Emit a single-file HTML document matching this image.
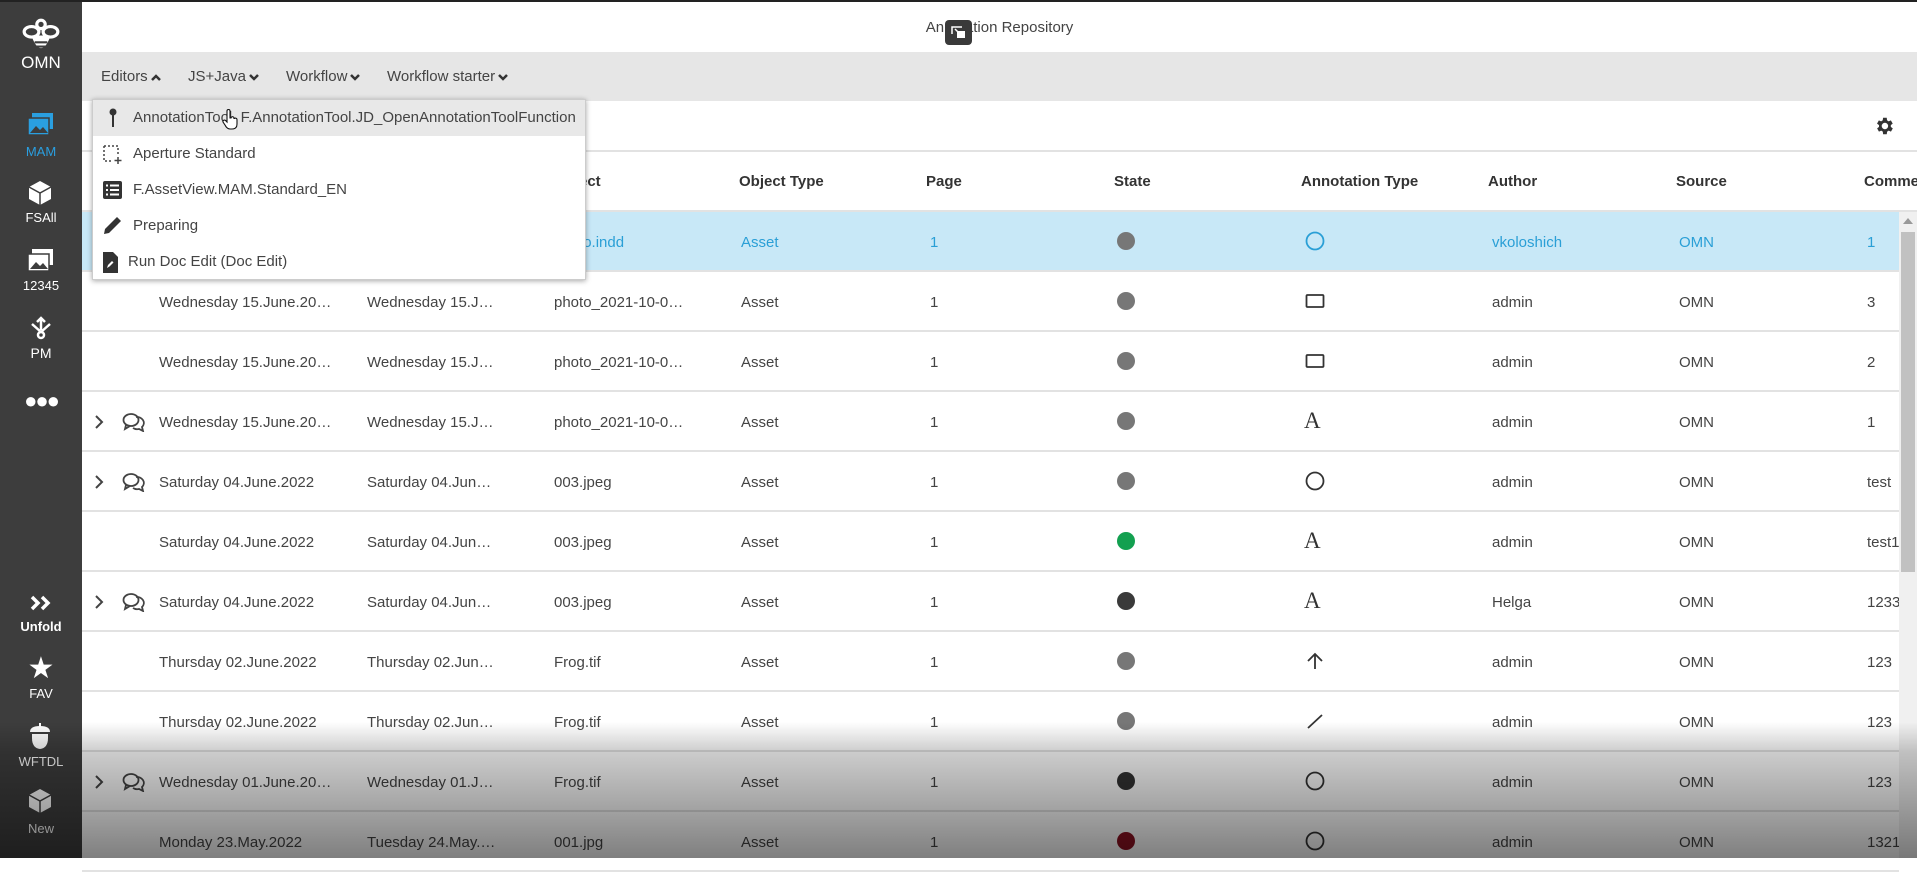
<!DOCTYPE html>
<html><head><meta charset="utf-8">
<style>
*{box-sizing:border-box;margin:0;padding:0}
body{width:1917px;height:858px;overflow:hidden;position:relative;font-family:"Liberation Sans",Arial,sans-serif;background:#fff;color:#444}
.abs{position:absolute}
#side{left:0;top:0;width:82px;height:858px;background:#3d3d3d;color:#fff;text-align:center}
.si{position:absolute;left:0;width:82px;font-size:13px;text-align:center}
#topline{left:0;top:0;width:1917px;height:2px;background:#222}
#title{left:82px;top:2px;width:1835px;height:50px;background:#fff;text-align:center;line-height:52px;font-size:15px;color:#444}
#tool{left:82px;top:52px;width:1835px;height:49px;background:#e6e6e6}
.menu{position:absolute;top:68px;font-size:15px;color:#444}
.menu svg{vertical-align:middle;margin-left:2px}
#bar2{left:82px;top:101px;width:1835px;height:51px;background:#fff;border-bottom:2px solid #e2e2e2}
.hd{position:absolute;top:173px;font-size:15px;font-weight:bold;color:#333}
.row{position:absolute;left:82px;width:1817px;height:60px;border-bottom:2px solid #e2e2e2}
.c{position:absolute;font-size:15px;white-space:nowrap;color:#444}
.dot{position:absolute;width:18px;height:18px;border-radius:50%}
#dd{left:92px;top:99px;width:494px;height:181px;background:#fff;box-shadow:0 1px 5px rgba(0,0,0,.35);border:1px solid #ccc}
.di{position:absolute;left:0;width:492px;height:36px;font-size:15px;color:#444;line-height:36px}
#shade{left:0;top:0;width:1917px;height:858px;pointer-events:none;background:linear-gradient(to bottom,rgba(0,0,0,0) 0,rgba(0,0,0,0) 722px,rgba(0,0,0,.2) 752px,rgba(0,0,0,.5) 858px)}
</style></head><body>
<div id="side" class="abs">
 <svg class="abs" style="left:21px;top:16px" width="40" height="40" viewBox="0 0 38 38" fill="none" stroke="#fff" stroke-width="3"><circle cx="19" cy="8" r="4"/><ellipse cx="10" cy="15" rx="7" ry="5"/><ellipse cx="28" cy="15" rx="7" ry="5"/><path d="M12 20 Q19 38 26 20 Z" fill="#fff"/><path d="M13 25h12M14 29h10" stroke="#3d3d3d" stroke-width="2"/></svg>
 <div class="si" style="top:53px;font-size:17px">OMN</div>
 <svg class="abs" style="left:27px;top:112px" width="27" height="24" viewBox="0 0 27 24"><rect x="5" y="1" width="21" height="16" fill="#2a9fe0"/><rect x="1" y="6" width="21" height="17" fill="#2a9fe0" stroke="#3d3d3d" stroke-width="1.5"/><path d="M3 21l6-7 4 4 3-3 5 6z" fill="#3d3d3d"/></svg>
 <div class="si" style="top:144px;color:#2a9fe0">MAM</div>
 <svg class="abs" style="left:28px;top:180px" width="24" height="26" viewBox="0 0 24 26"><path d="M12 1L23 7v12L12 25 1 19V7z" fill="#fff"/><path d="M1 7l11 6 11-6M12 13v12" stroke="#3d3d3d" stroke-width="1.5" fill="none"/></svg>
 <div class="si" style="top:210px">FSAll</div>
 <svg class="abs" style="left:27px;top:248px" width="27" height="24" viewBox="0 0 27 24"><rect x="5" y="1" width="21" height="16" fill="#fff"/><rect x="1" y="6" width="21" height="17" fill="#fff" stroke="#3d3d3d" stroke-width="1.5"/><path d="M3 21l6-7 4 4 3-3 5 6z" fill="#3d3d3d"/></svg>
 <div class="si" style="top:278px">12345</div>
 <svg class="abs" style="left:29px;top:316px" width="24" height="24" viewBox="0 0 24 24" stroke="#fff" stroke-width="2.5" fill="none"><path d="M12 2v12M8 6l4-4 4 4M3 8l9 8 9-8"/><circle cx="12" cy="19" r="3"/></svg>
 <div class="si" style="top:345px;font-size:14px">PM</div>
 <div class="si" style="top:388px;font-size:22px;letter-spacing:-2px">●●●</div>
 <svg class="abs" style="left:29px;top:594px" width="24" height="18" viewBox="0 0 24 18" fill="none" stroke="#fff" stroke-width="3.5"><path d="M3 3l6 6-6 6M13 3l6 6-6 6"/></svg>
 <div class="si" style="top:619px;font-weight:bold">Unfold</div>
 <div class="si" style="top:651px;font-size:30px">★</div>
 <div class="si" style="top:686px">FAV</div>
 <svg class="abs" style="left:28px;top:722px" width="24" height="28" viewBox="0 0 24 28"><path d="M12 1v4" stroke="#fff" stroke-width="2"/><path d="M2 10q0-6 10-6t10 6z" fill="#fff"/><path d="M4 12h16v4q0 10-8 11-8-1-8-11z" fill="#fff"/></svg>
 <div class="si" style="top:754px">WFTDL</div>
 <svg class="abs" style="left:28px;top:788px" width="24" height="26" viewBox="0 0 24 26"><path d="M12 1L23 7v12L12 25 1 19V7z" fill="#fff"/><path d="M1 7l11 6 11-6M12 13v12" stroke="#3d3d3d" stroke-width="1.5" fill="none"/></svg>
 <div class="si" style="top:821px">New</div>
</div>
<div id="topline" class="abs"></div>
<div id="title" class="abs">Annotation Repository</div>
<div class="abs" style="left:945px;top:20px;width:27px;height:25px;background:#3a3a3a;border-radius:4px"><svg width="27" height="25" viewBox="0 0 27 25"><rect x="12" y="11" width="8" height="7" fill="#fff"/><path d="M7 14V7h10M10 9l4 4" stroke="#fff" stroke-width="1.5" fill="none"/></svg></div>
<div id="tool" class="abs"></div>
<div class="menu" style="left:101px">Editors<svg width="12" height="10" viewBox="0 0 12 10"><path d="M2 8l4-4 4 4" stroke="#333" stroke-width="2.5" fill="none"/></svg></div>
<div class="menu" style="left:188px">JS+Java<svg width="12" height="10" viewBox="0 0 12 10"><path d="M2 3l4 4 4-4" stroke="#333" stroke-width="2.5" fill="none"/></svg></div>
<div class="menu" style="left:286px">Workflow<svg width="12" height="10" viewBox="0 0 12 10"><path d="M2 3l4 4 4-4" stroke="#333" stroke-width="2.5" fill="none"/></svg></div>
<div class="menu" style="left:387px">Workflow starter<svg width="12" height="10" viewBox="0 0 12 10"><path d="M2 3l4 4 4-4" stroke="#333" stroke-width="2.5" fill="none"/></svg></div>
<div id="bar2" class="abs"></div>
<svg class="abs" style="left:1873px;top:115px" width="22" height="22" viewBox="0 0 24 24"><path fill="#333" d="M19.4 13a7.5 7.5 0 000-2l2.1-1.6-2-3.5-2.5 1a7 7 0 00-1.7-1L15 3h-4l-.4 2.9a7 7 0 00-1.7 1l-2.5-1-2 3.5L6.6 11a7.5 7.5 0 000 2l-2.1 1.6 2 3.5 2.5-1a7 7 0 001.7 1L11 21h4l.4-2.9a7 7 0 001.7-1l2.5 1 2-3.5zM13 15.5a3.5 3.5 0 110-7 3.5 3.5 0 010 7z"/></svg>

<div class="hd" style="left:554px">Object</div>
<div class="hd" style="left:739px">Object Type</div>
<div class="hd" style="left:926px">Page</div>
<div class="hd" style="left:1114px">State</div>
<div class="hd" style="left:1301px">Annotation Type</div>
<div class="hd" style="left:1488px">Author</div>
<div class="hd" style="left:1676px">Source</div>
<div class="hd" style="left:1864px">Comments</div>
<div class="abs" style="left:82px;top:210px;width:1835px;height:2px;background:#e2e2e2"></div>

<div id="rows"></div>
<script>
var rows=[
["","", "Wednesday 15.June.20…","Wednesday 15.J…","photo.indd","#777","circ","vkoloshich","1",1],
["","", "Wednesday 15.June.20…","Wednesday 15.J…","photo_2021-10-0…","#777","rect","admin","3"],
["","", "Wednesday 15.June.20…","Wednesday 15.J…","photo_2021-10-0…","#777","rect","admin","2"],
[1,1,"Wednesday 15.June.20…","Wednesday 15.J…","photo_2021-10-0…","#777","A","admin","1"],
[1,1,"Saturday 04.June.2022","Saturday 04.Jun…","003.jpeg","#777","circ","admin","test"],
["","", "Saturday 04.June.2022","Saturday 04.Jun…","003.jpeg","#13a050","A","admin","test1"],
[1,1,"Saturday 04.June.2022","Saturday 04.Jun…","003.jpeg","#3a3a3a","A","Helga","1233"],
["","", "Thursday 02.June.2022","Thursday 02.Jun…","Frog.tif","#777","arrow","admin","123"],
["","", "Thursday 02.June.2022","Thursday 02.Jun…","Frog.tif","#777","line","admin","123"],
[1,1,"Wednesday 01.June.20…","Wednesday 01.J…","Frog.tif","#333","circ","admin","123"],
["","", "Monday 23.May.2022","Tuesday 24.May.…","001.jpg","#8a1020","circ","admin","1321"]];
var h="";
rows.forEach(function(r,i){
 var top=212+i*60, sel=r[9];
 var col=sel?"#2a9fd6":"#444";
 h+='<div class="row" style="top:'+top+'px;'+(sel?'background:#c8e8f7;':'')+'">';
 var y=22;
 if(r[0])h+='<svg class="abs" style="left:12px;top:22px" width="10" height="16" viewBox="0 0 10 16"><path d="M2 2l6 6-6 6" stroke="#444" stroke-width="2" fill="none"/></svg>';
 if(r[1])h+='<svg class="abs" style="left:40px;top:20px" width="24" height="20" viewBox="0 0 24 20" fill="none" stroke="#444" stroke-width="1.8"><ellipse cx="9" cy="8" rx="7.5" ry="6"/><path d="M4 13l-1 4 5-3"/><path d="M14 5a7 6 0 016 10l1 4-4-2a7 6 0 01-6-1"/></svg>';
 h+='<div class="c" style="left:77px;top:'+y+'px;color:'+col+'">'+(sel?'':r[2])+'</div>';
 h+='<div class="c" style="left:285px;top:'+y+'px;color:'+col+'">'+(sel?'':r[3])+'</div>';
 h+='<div class="c" style="left:472px;top:'+y+'px;color:'+col+'">'+r[4]+'</div>';
 h+='<div class="c" style="left:659px;top:'+y+'px;color:'+col+'">Asset</div>';
 h+='<div class="c" style="left:848px;top:'+y+'px;color:'+col+'">1</div>';
 h+='<div class="dot" style="left:1035px;top:20px;background:'+r[5]+'"></div>';
 var ic=sel?"#2a9fd6":"#333", t=r[6];
 var svg='<svg class="abs" style="left:1222px;top:18px" width="22" height="22" viewBox="0 0 22 22" fill="none" stroke="'+ic+'" stroke-width="1.8">';
 if(t=="circ")svg+='<circle cx="11" cy="11" r="8.5"/>';
 if(t=="rect")svg+='<rect x="2.5" y="5" width="17" height="12" rx="1"/>';
 if(t=="arrow")svg+='<path d="M11 19V4M4 11l7-7 7 7"/>';
 if(t=="line")svg+='<path d="M4 18L18 5"/>';
 svg+='</svg>';
 if(t=="A")svg='<div class="c" style="left:1222px;top:16px;font-family:\'Liberation Serif\',serif;font-size:23px;color:#333">A</div>';
 h+=svg;
 h+='<div class="c" style="left:1410px;top:'+y+'px;color:'+col+'">'+r[7]+'</div>';
 h+='<div class="c" style="left:1597px;top:'+y+'px;color:'+col+'">OMN</div>';
 h+='<div class="c" style="left:1785px;top:'+y+'px;color:'+col+'">'+r[8]+'</div>';
 h+='</div>';
});
document.getElementById('rows').innerHTML=h;
</script>
<div class="abs" style="left:1899px;top:212px;width:18px;height:646px;background:#f0f0f0"></div>
<div class="abs" style="left:1903px;top:218px;width:0;height:0;border-left:5px solid transparent;border-right:5px solid transparent;border-bottom:6px solid #999"></div>
<div class="abs" style="left:1901px;top:232px;width:14px;height:340px;background:#c1c1c1"></div>

<div id="dd" class="abs">
 <div class="di" style="top:0;background:#e8e8e8;padding-left:40px">AnnotationTool, F.AnnotationTool.JD_OpenAnnotationToolFunction</div>
 <svg class="abs" style="left:16px;top:8px" width="8" height="20" viewBox="0 0 8 20"><circle cx="4" cy="4" r="3.5" fill="#333"/><path d="M4 6v13" stroke="#333" stroke-width="2"/></svg>
 <div class="di" style="top:36px;padding-left:40px">Aperture Standard</div>
 <svg class="abs" style="left:10px;top:45px" width="20" height="20" viewBox="0 0 20 20" fill="none" stroke="#444" stroke-width="1.5" stroke-dasharray="2 2"><path d="M1 1h14v8M1 1v15h8"/><path d="M15 12v7M11.5 15.5h7" stroke-dasharray="0"/></svg>
 <div class="di" style="top:72px;padding-left:40px">F.AssetView.MAM.Standard_EN</div>
 <svg class="abs" style="left:10px;top:81px" width="19" height="18" viewBox="0 0 19 18"><rect width="19" height="18" rx="2" fill="#333"/><path d="M3 4.5h2M7 4.5h9M3 9h2M7 9h9M3 13.5h2M7 13.5h9" stroke="#fff" stroke-width="2"/></svg>
 <div class="di" style="top:108px;padding-left:40px">Preparing</div>
 <svg class="abs" style="left:10px;top:115px" width="20" height="20" viewBox="0 0 20 20"><path d="M1 19l1-5L14 2l4 4L6 18z" fill="#333"/></svg>
 <div class="di" style="top:144px;padding-left:35px">Run Doc Edit (Doc Edit)</div>
 <svg class="abs" style="left:10px;top:152px" width="15" height="21" viewBox="0 0 15 21"><path d="M0 0h10l5 5v16H0z" fill="#333"/><path d="M4 16l1-3 4-4 1.5 1.5-4 4z" fill="#fff"/></svg>
</div>
<svg class="abs" style="left:222px;top:108px" width="16" height="22" viewBox="0 0 16 22"><path d="M5 12V3a1.5 1.5 0 013 0v7h1a1.5 1.5 0 013 .5h.5a1.5 1.5 0 012.5 1V16q0 5-5 5H8q-3 0-5-4l-2-3a1.5 1.5 0 012.5-1.5L5 14z" fill="#fff" stroke="#111" stroke-width="1.1"/></svg>
<div id="shade" class="abs"></div>
</body></html>
